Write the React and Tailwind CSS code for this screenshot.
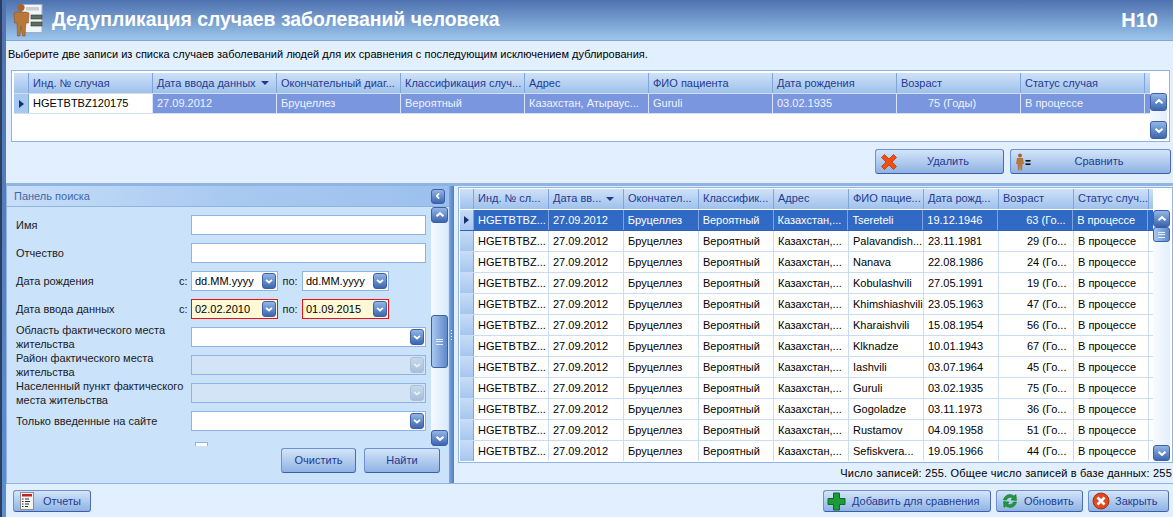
import React from "react";

const F = "font-['Liberation_Sans',sans-serif]";
const btnCls = "flex items-center whitespace-nowrap rounded-[3px] border border-[#6f90cf] border-b-[#3f5ca8] border-r-[#4d6bb5] bg-gradient-to-b from-[#d3e5f9] to-[#8fb3e3] text-[#1f3a93] text-[11px]";

function Chevron({ dir = "down", disabled }) {
  const d = dir === "down" ? "M4 6.5 L8 10 L12 6.5" : dir === "up" ? "M4 9.5 L8 6 L12 9.5" : "M9.5 4.5 L6.5 8 L9.5 11.5";
  return (
    <svg width="14" height="14" viewBox="0 0 16 16"><path d={d} fill="none" stroke={disabled ? "#e8eef6" : "#fff"} strokeWidth="2.4" /></svg>
  );
}

function Round({ dir, w = "w-[16px]", h = "h-[16px]", disabled }) {
  return (
    <div className={`${w} ${h} shrink-0 flex items-center justify-center rounded-[3px] border ${disabled ? "border-[#a9c0dd] bg-gradient-to-b from-[#c9d9ec] to-[#a7bedb]" : "border-[#3d5fa8] bg-gradient-to-b from-[#92b6e6] to-[#3d66b0]"}`}>
      <Chevron dir={dir} disabled={disabled} />
    </div>
  );
}

function Logo() {
  return (
    <svg width="30" height="36" viewBox="0 0 30 36">
      <rect x="9" y="2.5" width="20" height="28" fill="#f3f6f8" stroke="#9fb2c4" />
      <rect x="13" y="5" width="13" height="3.5" fill="#c9ccd0" />
      <rect x="18" y="13" width="11" height="4" fill="#5f6f5f" stroke="#2c3a30" strokeWidth="0.6" />
      <rect x="18" y="20" width="11" height="4" fill="#5f6f5f" stroke="#2c3a30" strokeWidth="0.6" />
      <circle cx="8" cy="5.5" r="3.6" fill="#a9632d" />
      <path d="M3 10 H13 L16 11 L15.5 21 L13 21 L12 34 H9.5 L8 24 L7 34 H4.5 L4 21 L1.5 21 L1 11 Z" fill="#b9783a" stroke="#7a4a22" strokeWidth="0.5" />
    </svg>
  );
}

function XIcon() {
  return (
    <svg width="18" height="18" viewBox="0 0 18 18"><path d="M1.5 4.5 L4.5 1.5 L9 6 L13.5 1.5 L16.5 4.5 L12 9 L16.5 13.5 L13.5 16.5 L9 12 L4.5 16.5 L1.5 13.5 L6 9 Z" fill="#f0500f" stroke="#b8380d" strokeWidth="0.8" /></svg>
  );
}

function PersonEq() {
  return (
    <svg width="18" height="18" viewBox="0 0 18 18">
      <circle cx="5" cy="2.5" r="2" fill="#a9632d" />
      <path d="M2 5 H8 L9 11 H7.5 L7 17.5 H5.5 L5 12 L4.5 17.5 H3 L2.5 11 H1 Z" fill="#b4783f" />
      <rect x="10.5" y="7" width="5" height="1.6" fill="#111" />
      <rect x="10.5" y="10.4" width="5" height="1.6" fill="#111" />
    </svg>
  );
}

function Plus() {
  return (
    <svg width="19" height="19" viewBox="0 0 19 19"><path d="M6.5 1 H12.5 V6.5 H18 V12.5 H12.5 V18 H6.5 V12.5 H1 V6.5 H6.5 Z" fill="#1c9c38" stroke="#0f6b20" /></svg>
  );
}

function Refresh() {
  return (
    <svg width="18" height="18" viewBox="0 0 18 18">
      <path d="M2.5 8 A6.5 6.5 0 0 1 13 4 L15 2.5 L15.5 8.5 L10 8 L11.5 6 A4 4 0 0 0 5.5 8 Z" fill="#1f9a3b" stroke="#0e6a26" strokeWidth="0.5" />
      <path d="M15.5 10 A6.5 6.5 0 0 1 5 14 L3 15.5 L2.5 9.5 L8 10 L6.5 12 A4 4 0 0 0 12.5 10 Z" fill="#1f9a3b" stroke="#0e6a26" strokeWidth="0.5" />
    </svg>
  );
}

function CloseIcon() {
  return (
    <svg width="18" height="18" viewBox="0 0 18 18">
      <circle cx="9" cy="9" r="8" fill="#dd4a1f" stroke="#a8300f" />
      <path d="M5.5 5.5 L12.5 12.5 M12.5 5.5 L5.5 12.5" stroke="#fff" strokeWidth="2.6" />
    </svg>
  );
}

function Report() {
  return (
    <svg width="14" height="18" viewBox="0 0 14 18">
      <rect x="0.5" y="0.5" width="13" height="17" fill="#f4f4f0" stroke="#8c8c8c" />
      <rect x="2" y="2" width="10" height="2.5" fill="#c4202a" />
      <path d="M2 7 H3.5 M5 7 H9 M2 9.5 H3.5 M5 9.5 H10 M2 12 H3.5 M5 12 H9 M2 14.5 H3.5 M5 14.5 H8" stroke="#333" />
    </svg>
  );
}

const topCols = [
  ["Инд. № случая", "HGETBTBZ120175"],
  ["Дата ввода данных", "27.09.2012"],
  ["Окончательный диаг...", "Бруцеллез"],
  ["Классификация случ...", "Вероятный"],
  ["Адрес", "Казахстан, Атыраус..."],
  ["ФИО пациента", "Guruli"],
  ["Дата рождения", "03.02.1935"],
  ["Возраст", "75 (Годы)"],
  ["Статус случая", "В процессе"],
];

const rightHead = ["Инд. № сл...", "Дата вв...", "Окончател...", "Классифик...", "Адрес", "ФИО пацие...", "Дата рожд...", "Возраст", "Статус случ..."];

const people = [
  ["Tsereteli", "19.12.1946", "63"],
  ["Palavandish...", "23.11.1981", "29"],
  ["Nanava", "22.08.1986", "24"],
  ["Kobulashvili", "27.05.1991", "19"],
  ["Khimshiashvili", "23.05.1963", "47"],
  ["Kharaishvili", "15.08.1954", "56"],
  ["Klknadze", "10.01.1943", "67"],
  ["Iashvili", "03.07.1964", "45"],
  ["Guruli", "03.02.1935", "75"],
  ["Gogoladze", "03.11.1973", "36"],
  ["Rustamov", "04.09.1958", "51"],
  ["Sefiskvera...", "19.05.1966", "44"],
];

const Arrow = () => <div className="w-0 h-0 border-y-[4px] border-y-transparent border-l-[5px] border-l-[#15306f]" />;
const SortDown = () => <span className="inline-block ml-[5px] w-0 h-0 border-x-[4px] border-x-transparent border-t-[4px] border-t-[#1f3a93] align-[2px]" />;

function TopGrid() {
  return (
    <div className="ml-[5px] mr-[3px] mt-[8px] h-[72px] border border-[#8fb4e4] p-[2px] bg-white flex">
      <div className="flex-1 flex flex-col">
        <div className="flex h-[20px]">
          <div className="w-[15px] border-r border-[#7ea6dd] bg-gradient-to-b from-[#cfe1f8] to-[#9fc1ec]" />
          {topCols.map(([h], i) => (
            <div key={h} className="w-[124px] pl-[4px] flex items-center border-r border-[#7ea6dd] bg-gradient-to-b from-[#cfe1f8] to-[#9fc1ec] text-[#1f3a93] whitespace-nowrap overflow-hidden">
              {h}{i === 1 && <SortDown />}
            </div>
          ))}
          <div className="flex-1 bg-gradient-to-b from-[#cfe1f8] to-[#9fc1ec]" />
        </div>
        <div className="flex h-[21px] border-y border-[#cfe0f5]">
          <div className="w-[15px] flex items-center justify-center border-r border-[#7ea6dd] bg-[#a9c8f0]"><Arrow /></div>
          {topCols.map(([h, v], i) => (
            <div key={h} className={`w-[124px] flex items-center border-r border-[#d6e4f6] whitespace-nowrap overflow-hidden ${i === 0 ? "bg-white text-black pl-[4px]" : "bg-[#7a96df] text-[#eef3fc] " + (i === 7 ? "pl-[31px]" : "pl-[4px]")}`}>{v}</div>
          ))}
          <div className="flex-1 bg-[#7a96df]" />
        </div>
      </div>
      <div className="w-[17px] mt-[20px] flex flex-col justify-between bg-gradient-to-r from-[#f4f9ff] to-[#e2eefc]">
        <Round dir="up" w="w-[17px]" h="h-[18px]" />
        <Round dir="down" w="w-[17px]" h="h-[18px]" />
      </div>
    </div>
  );
}

function Field({ label, children }) {
  return (
    <div className="flex items-center h-[28px]">
      <div className="w-[184px] pl-[9px] leading-[14px] text-[#1b1b1b] whitespace-nowrap">{label}</div>
      {children}
    </div>
  );
}

function TextBox({ w = "w-[235px]", disabled, combo }) {
  return (
    <div className={`${w} h-[20px] flex items-center justify-end pr-[1px] border border-[#8fb4e4] ${disabled ? "bg-[#d3e4f6]" : "bg-white"}`}>
      {combo && <Round dir="down" w="w-[14px]" h="h-[16px]" disabled={disabled} />}
    </div>
  );
}

function DateBox({ value, red }) {
  return (
    <div className={`w-[87px] h-[20px] flex items-center pl-[3px] pr-[1px] ${red ? "border border-[#ee1010] bg-[#fef9d4]" : "border border-[#8fb4e4] bg-white"} text-black`}>
      <span className="flex-1">{value}</span>
      <Round dir="down" w="w-[14px]" h="h-[16px]" />
    </div>
  );
}

function DateRow({ label, a, b, red }) {
  return (
    <Field label={label}>
      <span className="w-[0px] whitespace-nowrap -translate-x-[12px] text-[#1b1b1b]">с:</span>
      <DateBox value={a} red={red} />
      <span className="w-[24px] text-center text-[#1b1b1b]">по:</span>
      <DateBox value={b} red={red} />
    </Field>
  );
}

function SearchPanel() {
  return (
    <div className="w-[443px] shrink-0 border-l border-[#8fb4e4] bg-[#cbe2fb] flex flex-col overflow-hidden">
      <div className="h-[21px] flex items-center justify-between pl-[7px] pr-[4px] border-b border-[#8fb4e4] bg-gradient-to-r from-[#c8def8] via-[#a8c9f0] to-[#9cc0ee] text-[#3f67ab]">
        <span>Панель поиска</span>
        <Round dir="left" w="w-[14px]" h="h-[15px]" />
      </div>
      <div className="flex flex-1 min-h-0">
        <div className="w-[424px] h-[239px] overflow-hidden pt-[4px]">
          <Field label="Имя"><TextBox /></Field>
          <Field label="Отчество"><TextBox /></Field>
          <DateRow label="Дата рождения" a="dd.MM.yyyy" b="dd.MM.yyyy" />
          <DateRow label="Дата ввода данных" a="02.02.2010" b="01.09.2015" red />
          <Field label={<>Область фактического места<br />жительства</>}><TextBox combo /></Field>
          <Field label={<>Район фактического места<br />жительства</>}><TextBox combo disabled /></Field>
          <Field label={<>Населенный пункт фактического<br />места жительства</>}><TextBox combo disabled /></Field>
          <Field label="Только введенные на сайте"><TextBox combo /></Field>
          <div className="ml-[188px] mt-[7px] w-[13px] h-[13px] border border-[#8fb4e4] bg-white" />
        </div>
        <div className="w-[17px] h-[239px] flex flex-col bg-gradient-to-r from-[#f6fbff] to-[#dbeafb]">
          <Round dir="up" w="w-[17px]" h="h-[16px]" />
          <div className="mt-[92px] w-[17px] h-[53px] flex items-center justify-center rounded-[3px] border border-[#3d5fa8] bg-gradient-to-r from-[#a9c8f0] to-[#5e88c9]">
            <div className="w-[7px] h-[6px] border-y border-[#e4eefb] flex items-center"><div className="w-full h-px bg-[#e4eefb]" /></div>
          </div>
          <div className="flex-1" />
          <Round dir="down" w="w-[17px]" h="h-[16px]" />
        </div>
      </div>
      <div className="h-[36px] flex justify-end gap-[8px] pr-[9px] pt-[1px]">
        <button className={`${btnCls} w-[75px] h-[25px] justify-center`}>Очистить</button>
        <button className={`${btnCls} w-[76px] h-[25px] justify-center`}>Найти</button>
      </div>
    </div>
  );
}

function Splitter() {
  return (
    <div className="w-[9px] shrink-0 flex">
      <div className="w-[5px] bg-gradient-to-r from-[#7ea6dd] to-[#4f7cc4] flex flex-col items-center justify-center gap-[2px]">
        <div className="w-px h-px bg-white" /><div className="w-px h-px bg-white" /><div className="w-px h-px bg-white" /><div className="w-px h-px bg-white" />
      </div>
    </div>
  );
}

function RightGrid() {
  return (
    <div className="flex-1 min-w-0 flex flex-col">
      <div className="h-[276px] shrink-0 mt-[1px] border border-[#8fb4e4] p-[1px] bg-white flex overflow-hidden">
        <div className="flex-1 flex flex-col overflow-hidden">
          <div className="flex h-[20px] shrink-0 mb-[1px]">
            <div className="w-[14px] border-r border-[#7ea6dd] bg-gradient-to-b from-[#cfe1f8] to-[#9fc1ec]" />
            {rightHead.map((h, i) => (
              <div key={i} className="w-[75px] pl-[4px] pb-[1px] flex items-center border-r border-[#7ea6dd] bg-gradient-to-b from-[#cfe1f8] to-[#9fc1ec] text-[#1f3a93] whitespace-nowrap overflow-hidden">
                {h}{i === 1 && <SortDown />}
              </div>
            ))}
            <div className="flex-1 bg-gradient-to-b from-[#cfe1f8] to-[#9fc1ec]" />
          </div>
          {people.map(([n, d, a], r) => {
            const sel = r === 0;
            const vals = ["HGETBTBZ...", "27.09.2012", "Бруцеллез", "Вероятный", "Казахстан,...", n, d, `${a} (Го...`, "В процессе"];
            return (
              <div key={r} className={`flex h-[21px] shrink-0 border-b ${sel ? "border-[#2f62b8]" : "border-[#c9dcf5]"}`}>
                <div className="w-[14px] flex items-center justify-center border-r border-[#7ea6dd] bg-gradient-to-b from-[#c7dcf6] to-[#a6c6ee]">{sel && <Arrow />}</div>
                {vals.map((v, i) => (
                  <div key={i} className={`w-[75px] flex items-center border-r whitespace-nowrap overflow-hidden ${i === 7 ? "pl-[28px]" : "pl-[4px]"} ${sel ? "bg-[#316ac5] text-white border-[#7fa4dd]" : "bg-white text-black border-[#c9dcf5]"}`}>{v}</div>
                ))}
                {sel && <div className="w-[5px] bg-[#316ac5]" />}
              </div>
            );
          })}
          <div className="flex flex-1">
            <div className="w-[14px] border-r border-[#7ea6dd] bg-[#c7dcf6]" />
            {rightHead.map((_, i) => <div key={i} className="w-[75px] border-r border-[#c9dcf5]" />)}
          </div>
        </div>
        <div className="w-[17px] mt-[21px] mr-[1px] h-[251px] flex flex-col bg-gradient-to-r from-[#f6fbff] to-[#e4effc]">
          <Round dir="up" w="w-[17px]" h="h-[17px]" />
          <div className="w-[17px] h-[15px] flex items-center justify-center rounded-[3px] border border-[#3d5fa8] bg-gradient-to-r from-[#a9c8f0] to-[#5e88c9]">
            <div className="w-[7px] h-[6px] border-y border-[#e4eefb] flex items-center"><div className="w-full h-px bg-[#e4eefb]" /></div>
          </div>
          <div className="flex-1" />
          <Round dir="down" w="w-[17px]" h="h-[16px]" />
        </div>
      </div>
      <div className="flex-1 flex items-center justify-end pr-[1px] bg-[#e1effe] text-black tracking-[0.2px] whitespace-nowrap">Число записей: 255. Общее число записей в базе данных: 255</div>
    </div>
  );
}

export default function App() {
  return (
    <div className={`${F} w-[1173px] h-[517px] flex overflow-hidden text-[11px] bg-[#e1effe]`}>
      <div className="w-[2px] bg-[#2c3e5e]" />
      <div className="w-[4px] bg-gradient-to-b from-[#4f73b0] to-[#5f8fd0]" />
      <div className="flex-1 min-w-0 flex flex-col">
        <div className="h-[41px] shrink-0 flex items-center bg-gradient-to-b from-[#4f72b0] to-[#9cc6ec] border-b border-[#7fa7dc]">
          <div className="ml-[7px] w-[39px]"><Logo /></div>
          <h1 className="font-bold text-white text-[19.4px] whitespace-nowrap">Дедупликация случаев заболеваний человека</h1>
          <div className="ml-auto mr-[15px] font-bold text-white text-[20px]">H10</div>
        </div>
        <p className="h-[19px] mt-[2px] pl-[2px] flex items-end text-black whitespace-nowrap">Выберите две записи из списка случаев заболеваний людей для их сравнения с последующим исключением дублирования.</p>
        <TopGrid />
        <div className="h-[41px] shrink-0 flex justify-end gap-[6px] pt-[7px] pr-[2px]">
          <button className={`${btnCls} w-[129px] h-[25px] pl-[4px]`}><XIcon /><span className="flex-1 pr-[5px] text-center">Удалить</span></button>
          <button className={`${btnCls} w-[161px] h-[25px] pl-[4px]`}><PersonEq /><span className="flex-1 pr-[5px] text-center">Сравнить</span></button>
        </div>
        <div className="h-[3px] shrink-0 bg-[#8fb4e4]" />
        <div className="flex h-[298px] shrink-0 border-b border-[#8fb4e4]">
          <SearchPanel />
          <Splitter />
          <RightGrid />
        </div>
        <div className="flex-1 flex items-start pt-[6px] pl-[7px] pr-[4px] gap-[5px]">
          <button className={`${btnCls} w-[78px] h-[22px] pl-[6px] gap-[9px] mr-auto`}><Report />Отчеты</button>
          <button className={`${btnCls} w-[168px] h-[22px] pl-[3px] gap-[6px]`}><Plus />Добавить для сравнения</button>
          <button className={`${btnCls} w-[87px] h-[22px] pl-[4px] gap-[5px]`}><Refresh />Обновить</button>
          <button className={`${btnCls} w-[81px] h-[22px] pl-[3px] gap-[5px]`}><CloseIcon />Закрыть</button>
        </div>
      </div>
    </div>
  );
}
